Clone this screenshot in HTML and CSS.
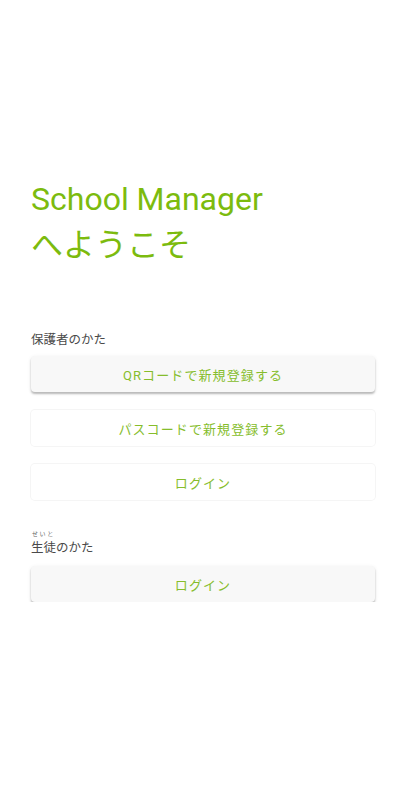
FILE: index.html
```html
<!DOCTYPE html>
<html lang="ja">
<head>
<meta charset="utf-8">
<title>School Manager</title>
<link rel="stylesheet" href="styles.css">
</head>
<body>
<main class="page">
  <h1 class="title">
    <span class="title-line title-en">School Manager</span>
    <span class="title-line title-ja">へようこそ</span>
  </h1>

  <section class="group group-parent">
    <p class="group-label">保護者のかた</p>
    <div class="actions">
      <button class="btn btn-raised" type="button">QRコードで新規登録する</button>
      <button class="btn btn-flat" type="button">パスコードで新規登録する</button>
      <button class="btn btn-flat" type="button">ログイン</button>
    </div>
  </section>

  <section class="group group-student">
    <p class="group-label group-label-ruby"><span class="furigana">せいと</span><span class="label-text">生徒のかた</span></p>
    <div class="actions">
      <button class="btn btn-raised" type="button">ログイン</button>
    </div>
  </section>
</main>
</body>
</html>
```

FILE: styles.css
```css
html, body {
  margin: 0;
  padding: 0;
  background: #ffffff;
}

body {
  font-family: Roboto, "Noto Sans CJK JP", sans-serif;
  color: #4a4a4a;
}

.page {
  padding: 179px 31px 0;
}

.title {
  margin: 0;
  font-weight: 400;
  font-size: 32px;
  line-height: 40px;
  color: #7cbb0e;
}

.title-line {
  display: block;
}

.title-ja {
  font-family: "Noto Sans CJK JP", sans-serif;
  line-height: 46px;
}

.group-parent {
  margin-top: 66px;
}

.group-student {
  margin-top: 30px;
}

.group-label {
  margin: 0 0 9px;
  font-family: "Noto Sans CJK JP", sans-serif;
  font-size: 12.5px;
  line-height: 16px;
  color: #4a4a4a;
}

.group-label-ruby {
  display: flex;
  flex-direction: column;
  align-items: flex-start;
  margin-bottom: 11px;
}

.furigana {
  display: block;
  margin-bottom: 2px;
  padding-left: 1px;
  font-size: 6px;
  line-height: 7px;
  letter-spacing: 1.6px;
  color: #666666;
}

.label-text {
  display: block;
}

.actions {
  display: flex;
  flex-direction: column;
  gap: 18px;
}

.btn {
  display: block;
  width: 100%;
  height: 36px;
  padding: 0 16px;
  border: none;
  border-radius: 4px;
  font-family: Roboto, "Noto Sans CJK JP", sans-serif;
  font-size: 13px;
  font-weight: 400;
  letter-spacing: 1.1px;
  color: #86bd2c;
  cursor: pointer;
}

.btn-raised {
  background: #f8f8f8;
  box-shadow: 0 2px 2px rgba(0, 0, 0, 0.24), 0 1px 4px rgba(0, 0, 0, 0.08);
}

.btn-flat {
  background: #ffffff;
  box-shadow: 0 0 0 1px #f5f5f5;
}
```
